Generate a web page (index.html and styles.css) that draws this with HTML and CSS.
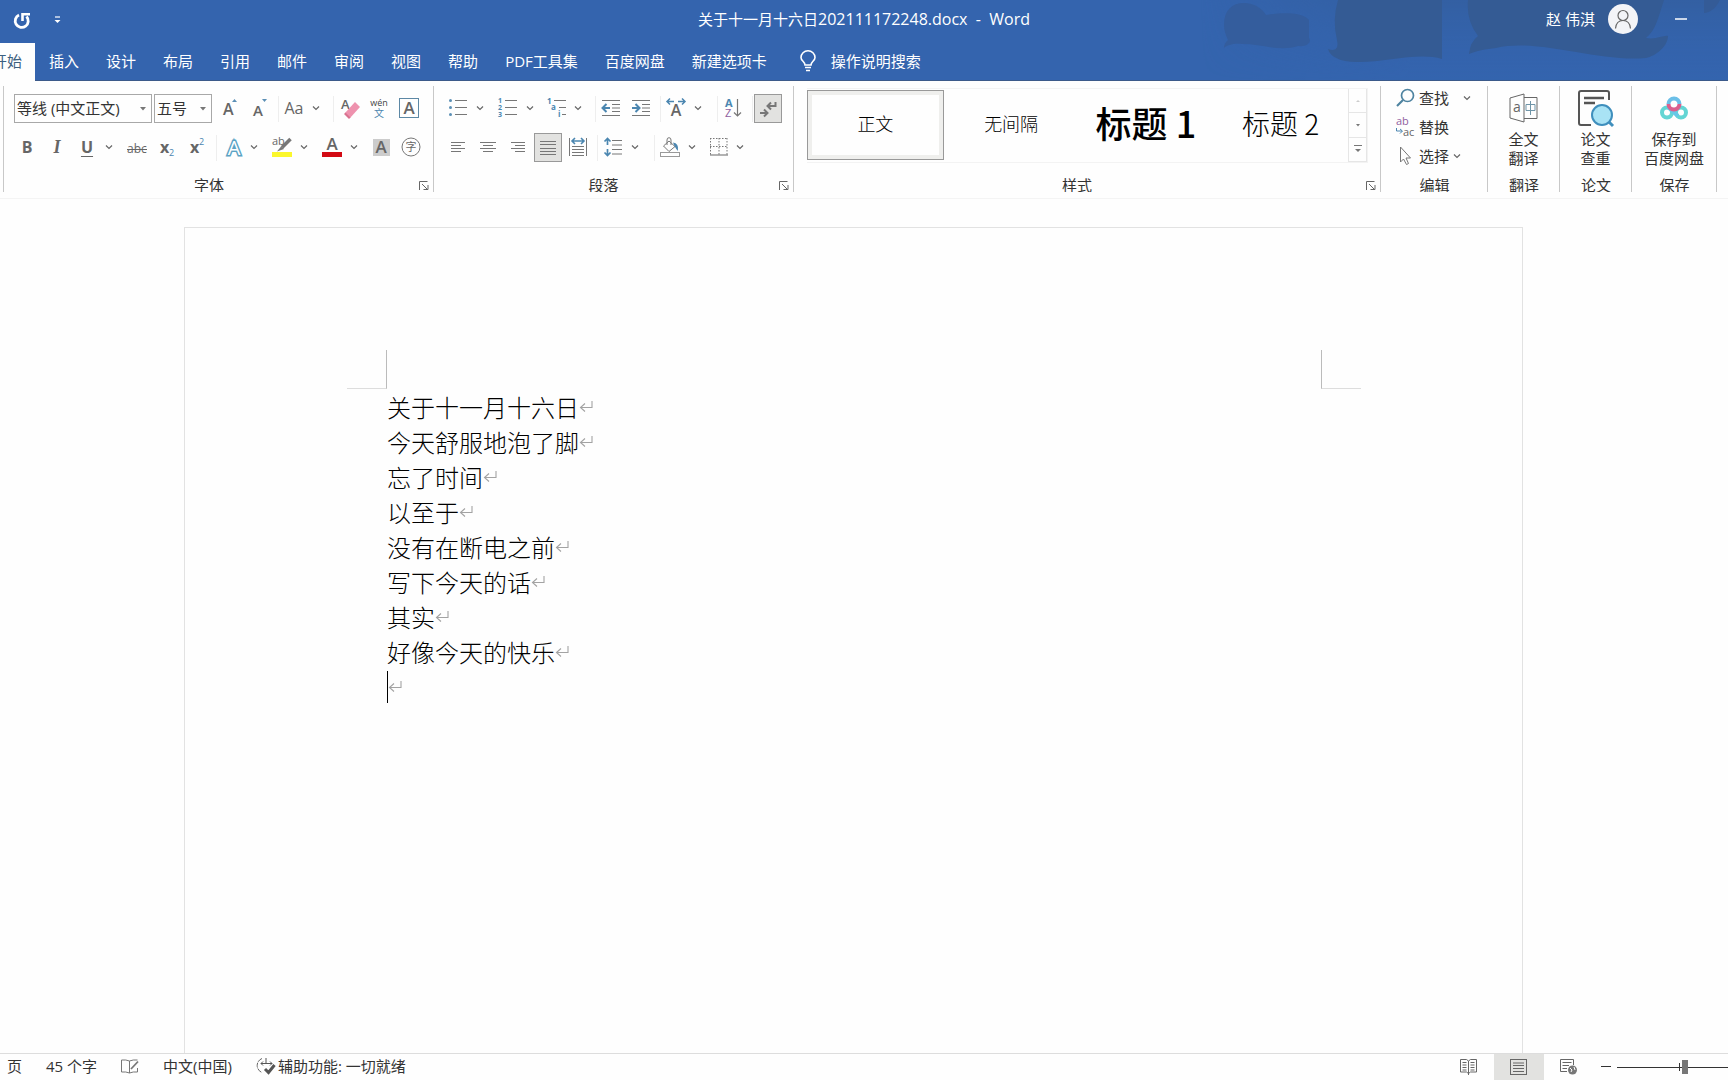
FILE: index.html
```html
<!DOCTYPE html>
<html lang="zh-CN">
<head>
<meta charset="utf-8">
<meta name="viewport" content="width=device-width, initial-scale=1">
<title>关于十一月十六日202111172248.docx - Word</title>
<link rel="stylesheet" href="styles.css">
</head>
<body>
<svg class="defs" aria-hidden="true">
  <symbol id="chev" viewBox="0 0 8 6"><path d="M1 1.5L4 4.5L7 1.5" fill="none" stroke="#666" stroke-width="1.2"/></symbol>
  <symbol id="tri" viewBox="0 0 8 6"><path d="M1 1H7L4 4.5Z" fill="#777"/></symbol>
  <symbol id="ret" viewBox="0 0 14 14"><path d="M13 1V7.5H2M6 3.5L1.5 7.5L6 11.5" fill="none" stroke="#a3a3a3" stroke-width="1.1"/></symbol>
  <symbol id="launch" viewBox="0 0 10 9"><path d="M.5 9V.5H8.500M3 3L8 8M9 4V8.500H4.500" fill="none" stroke="#666"/></symbol>
</svg>

<header class="top">
  <svg class="art" viewBox="0 0 528 81" aria-hidden="true">
    <defs>
      <linearGradient id="haze" x1="0" y1="0" x2="0" y2="1"><stop offset="0" stop-color="#335d9b"/><stop offset="1" stop-color="#3464ae" stop-opacity="0"/></linearGradient>
      <linearGradient id="side" x1="0" y1="0" x2="1" y2="0"><stop offset="0" stop-color="#000"/><stop offset=".4" stop-color="#fff"/><stop offset="1" stop-color="#fff"/></linearGradient>
      <mask id="fade"><rect width="528" height="81" fill="url(#side)"/></mask>
    </defs>
    <rect width="528" height="81" fill="url(#haze)" opacity=".6" mask="url(#fade)"/>
    <path d="M24 25C24 10 32 3 44 3C54 3 62 8 66 15C80 12 104 12 109 20V38C112 42 107 47 98 46C80 52 62 44 42 44C34 43 27 45 24 48Q24 43 28 40Q24 32 24 25Z" fill="#345d9d"/>
    <path d="M138 0H242V59C220 52 186 62 160 62C142 63 130 57 128 49Q140 53 137 40Q132 20 138 0Z" fill="#345b94"/>
    <path d="M268 0H464C458 18 456 30 446 38C456 40 463 35 468 36C468 46 456 56 446 58C424 60 400 56 376 52C350 48 320 42 296 48C286 49 276 51 269 54Q270 42 278 36Q266 20 268 0Z" fill="#345b94"/>
    <path d="M504 0H520C516 8 510 13 504 13Z" fill="#345b97"/>
  </svg>
  <div class="titlebar">
    <div class="quick">
      <button class="plain" aria-label="重复"><svg width="18" height="18" viewBox="0 0 18 18"><path d="M6 4A6.500 6.500 0 1 0 13.500 5.500" fill="none" stroke="#fff" stroke-width="2.800"/><path d="M9.500 10V3.200H17" fill="none" stroke="#fff" stroke-width="2.600"/></svg></button>
      <button class="plain" aria-label="自定义快速访问工具栏"><svg width="7" height="8" viewBox="0 0 7 8"><path d="M1 1H6" stroke="#fff" stroke-width="1.200"/><path d="M.5 4H6.500L3.500 7Z" fill="#fff"/></svg></button>
    </div>
    <h1 class="title">关于十一月十六日<span class="latin">202111172248.docx&nbsp; -&nbsp; Word</span></h1>
    <div class="account">
      <span>赵 伟淇</span>
      <button class="avatar" aria-label="帐户"><svg width="20" height="20" viewBox="0 0 20 20" fill="none" stroke="#666" stroke-width="1.200"><circle cx="10" cy="6.500" r="5"/><path d="M2.500 19.500C3 14 6 11.500 10 11.500S17 14 17.500 19.500"/></svg></button>
      <button class="plain" aria-label="最小化"><svg width="12" height="2" viewBox="0 0 12 2"><path d="M0 1H12" stroke="#fff" stroke-width="1.500"/></svg></button>
    </div>
  </div>
  <nav class="tabs">
    <button class="tab active">开始</button><button class="tab">插入</button><button class="tab">设计</button><button class="tab">布局</button><button class="tab">引用</button><button class="tab">邮件</button><button class="tab">审阅</button><button class="tab">视图</button><button class="tab">帮助</button><button class="tab">PDF工具集</button><button class="tab">百度网盘</button><button class="tab">新建选项卡</button>
    <button class="tell"><svg width="16" height="22" viewBox="0 0 16 22" fill="none" stroke="#fff" stroke-width="1.600"><path d="M5 15C5 11.500 1 11 1 7.500A7 6.700 0 0 1 15 7.500C15 11 11 11.500 11 15Z"/><path d="M5 17.500H11M6 20.500H10"/></svg>操作说明搜索</button>
  </nav>
</header>

<section class="ribbon" aria-label="功能区">
  <div class="group font-group">
    <div class="rows">
      <div class="row combos">
        <label class="combo wide"><select aria-label="字体"><option>等线 (中文正文)</option></select><svg width="8" height="6"><use href="#tri"/></svg></label>
        <label class="combo"><select aria-label="字号"><option>五号</option></select><svg width="8" height="6"><use href="#tri"/></svg></label>
        <button class="ib" aria-label="增大字号"><svg width="20" height="20"><text x="4" y="17" font-size="16" class="mid">A</text><path d="M13 4L15.500 1L18 4Z" fill="#5b8fb5"/></svg></button>
        <button class="ib" aria-label="减小字号"><svg width="20" height="20"><text x="4" y="18" font-size="15" class="mid">A</text><path d="M13 1H18L15.500 4Z" fill="#5b8fb5"/></svg></button>
        <i class="sep"></i>
        <button class="split" aria-label="更改大小写"><span class="g">Aa</span><svg width="8" height="6"><use href="#chev"/></svg></button>
        <i class="sep"></i>
        <button class="ib" aria-label="清除格式"><svg width="20" height="20"><text x="2" y="11" font-size="13" class="mid">A</text><path d="M6 15L16 4L21 9L11 20Z" fill="#ee92ae"/><path d="M5 16L6.500 14.500L11.500 19.500L10 21Z" fill="#d9728f"/></svg></button>
        <button class="ib" aria-label="拼音指南"><svg width="20" height="20"><text x="10" y="8" font-size="9" text-anchor="middle" class="dark">wén</text><text x="10" y="19" font-size="10" text-anchor="middle" class="blue">文</text></svg></button>
        <button class="ib" aria-label="字符边框"><svg width="20" height="20"><rect x=".5" y=".5" width="19" height="19" fill="none" stroke="#5c88a5"/><text x="10" y="16" font-size="17" text-anchor="middle" class="mid">A</text></svg></button>
      </div>
      <div class="row">
        <button class="ib g semi b" aria-label="加粗">B</button>
        <button class="ib g ital" aria-label="倾斜">I</button>
        <button class="split" aria-label="下划线"><span class="g semi under">U</span><svg width="8" height="6"><use href="#chev"/></svg></button>
        <button class="ib" aria-label="删除线"><svg width="22" height="20"><text x="11" y="16" font-size="12" text-anchor="middle">abc</text><path d="M1 12.500H21" stroke="#666"/></svg></button>
        <button class="ib" aria-label="下标"><svg width="20" height="20"><text x="3" y="16" font-size="16" class="semi">x</text><text x="12" y="19" font-size="9" class="blue">2</text></svg></button>
        <button class="ib" aria-label="上标"><svg width="20" height="20"><text x="3" y="16" font-size="16" class="semi">x</text><text x="12" y="8" font-size="9" class="blue">2</text></svg></button>
        <i class="sep"></i>
        <button class="split" aria-label="文本效果"><svg width="20" height="20"><text x="12" y="18" font-size="20" text-anchor="middle" class="outline">A</text></svg><svg width="8" height="6"><use href="#chev"/></svg></button>
        <button class="split" aria-label="突出显示"><svg width="20" height="20"><rect y="15" width="20" height="5" fill="#fbf72c"/><text x="0" y="8" font-size="11">ab</text><path d="M18.500 2L10 10.500" stroke="#777" stroke-width="3.500"/><path d="M9 9.500L12 12L5 14.500Z" fill="#777"/></svg><svg width="8" height="6"><use href="#chev"/></svg></button>
        <button class="split" aria-label="字体颜色"><svg width="20" height="20"><rect y="15" width="20" height="5" fill="#d20a14"/><text x="10" y="13" font-size="17" text-anchor="middle" class="mid">A</text></svg><svg width="8" height="6"><use href="#chev"/></svg></button>
        <button class="ib" aria-label="字符底纹"><svg width="18" height="20"><rect y="2" width="17" height="17" fill="#ccc"/><text x="8" y="16" font-size="17" text-anchor="middle" class="mid">A</text></svg></button>
        <button class="ib" aria-label="带圈字符"><svg width="20" height="20"><circle cx="9" cy="10" r="9" fill="none" stroke="#777"/><text x="9" y="14" font-size="11" text-anchor="middle">字</text></svg></button>
      </div>
    </div>
    <div class="foot"><span>字体</span><button class="launcher" aria-label="字体设置"><svg width="10" height="9"><use href="#launch"/></svg></button></div>
  </div>

  <div class="group para-group">
    <div class="rows">
      <div class="row">
        <button class="split" aria-label="项目符号"><svg width="18" height="20"><g fill="#5b8fb5"><circle cx="1.500" cy="2.500" r="1.500"/><circle cx="1.500" cy="9.500" r="1.500"/><circle cx="1.500" cy="16.500" r="1.500"/></g><path d="M6 2.500H18M6 9.500H18M6 16.500H18" stroke="#777"/></svg><svg width="8" height="6"><use href="#chev"/></svg></button>
        <button class="split" aria-label="编号"><svg width="20" height="20"><g font-size="7" class="blue semi"><text x="0" y="5">1</text><text x="0" y="12">2</text><text x="0" y="19">3</text></g><path d="M7 2.500H19M7 9.500H19M7 16.500H19" stroke="#777"/></svg><svg width="8" height="6"><use href="#chev"/></svg></button>
        <button class="split narrow" aria-label="多级列表"><svg width="20" height="20"><g font-size="8" class="blue semi"><text x="0" y="6">1</text><text x="4" y="12">a</text><text x="11" y="19">i</text></g><path d="M7 2.500H19M12 9.500H19M15 16.500H19" stroke="#777"/></svg><svg width="8" height="6"><use href="#chev"/></svg></button>
        <i class="sep"></i>
        <button class="ib" aria-label="减少缩进"><svg width="20" height="18" fill="none"><path d="M1 1.500H19M11 5.500H19M11 9H19M11 12.500H19M1 16.500H19" stroke="#777"/><path d="M9 9H2M5.500 5L1.500 9L5.500 13" stroke="#4b86b0" stroke-width="2"/></svg></button>
        <button class="ib" aria-label="增加缩进"><svg width="20" height="18" fill="none"><path d="M1 1.500H19M11 5.500H19M11 9H19M11 12.500H19M1 16.500H19" stroke="#777"/><path d="M1 9H8M4.500 5L8.500 9L4.500 13" stroke="#4b86b0" stroke-width="2"/></svg></button>
        <i class="sep"></i>
        <button class="split" aria-label="中文版式"><svg width="20" height="20"><text x="10" y="18" font-size="16" text-anchor="middle" class="mid">A</text><path d="M1 3.500H8M4 .5L1 3.500L4 6.500M12 3.500H19M16 .5L19 3.500L16 6.500" stroke="#4b86b0" stroke-width="1.500" fill="none"/></svg><svg width="8" height="6"><use href="#chev"/></svg></button>
        <i class="sep wider"></i>
        <button class="ib" aria-label="排序"><svg width="18" height="20"><text x="1" y="9" font-size="11" class="blue semi">A</text><text x="1" y="19" font-size="11" class="purple">Z</text><path d="M13.500 1V18M10 14.500L13.500 18L17 14.500" fill="none" stroke="#777" stroke-width="1.200"/></svg></button>
        <i class="sep"></i>
        <button class="ib on" aria-label="显示编辑标记" aria-pressed="true"><svg width="18" height="20" fill="none" stroke="#777" stroke-width="2"><path d="M16.500 3V7H9M12 3.500L8.500 7L12 10.500M1 14H8M5 10.500L8.500 14L5 17.500"/></svg></button>
      </div>
      <div class="row">
        <button class="ib" aria-label="左对齐"><svg width="16" height="12"><path d="M1 1.500H15M1 4.500H11M1 7.500H15M1 10.500H11" stroke="#777"/></svg></button>
        <button class="ib" aria-label="居中"><svg width="16" height="12"><path d="M0 1.500H16M3 4.500H13M0 7.500H16M3 10.500H13" stroke="#777"/></svg></button>
        <button class="ib" aria-label="右对齐"><svg width="16" height="12"><path d="M1 1.500H15M5 4.500H15M1 7.500H15M5 10.500H15" stroke="#777"/></svg></button>
        <button class="ib on" aria-label="两端对齐" aria-pressed="true"><svg width="16" height="14"><path d="M0 .5H16M0 3.500H16M0 7.500H16M0 10.500H16M0 13.500H16" stroke="#777"/></svg></button>
        <button class="ib" aria-label="分散对齐"><svg width="18" height="20" fill="none"><path d="M.5 1V19M17.500 1V19M3 9.500H15M3 12.500H15M3 15.500H15M3 18.500H15" stroke="#777"/><path d="M3 4H15M6 1L3 4L6 7M12 1L15 4L12 7" stroke="#4b86b0" stroke-width="1.600"/></svg></button>
        <i class="sep"></i>
        <button class="split" aria-label="行距"><svg width="18" height="20" fill="none"><path d="M8 3.500H18M8 8H18M8 12.500H18M8 17H18" stroke="#777"/><path d="M3.500 1V8M.5 4.500L3.500 1.500L6.500 4.500M3.500 12V19M.5 15.500L3.500 18.500L6.500 15.500" stroke="#4b86b0" stroke-width="1.700"/></svg><svg width="8" height="6"><use href="#chev"/></svg></button>
        <i class="sep wider"></i>
        <button class="split" aria-label="底纹"><svg width="20" height="20" fill="none"><rect x=".5" y="15.500" width="19" height="4" stroke="#999"/><path d="M9 4L15 9.500L9 14.500L3.500 9Z" stroke="#777"/><path d="M7 8V3Q7 .7 9 .7T11 3V8" stroke="#777"/><path d="M13 5.500Q19 6 18 14Q16 12 14.500 9Z" fill="#4b86b0"/></svg><svg width="8" height="6"><use href="#chev"/></svg></button>
        <button class="split narrow" aria-label="边框"><svg width="18" height="18" fill="none"><path d="M.5 0V17M17 0V17M9 0V17M0 .5H18M0 8.500H18" stroke="#777" stroke-dasharray="1.500 1.500"/><path d="M0 17H18" stroke="#666"/></svg><svg width="8" height="6"><use href="#chev"/></svg></button>
      </div>
    </div>
    <div class="foot"><span>段落</span><button class="launcher" aria-label="段落设置"><svg width="10" height="9"><use href="#launch"/></svg></button></div>
  </div>

  <div class="group style-group">
    <div class="gallery">
      <button class="style selected">正文</button>
      <button class="style">无间隔</button>
      <button class="style h-one">标题 1</button>
      <button class="style h-two">标题 2</button>
      <div class="scroll">
        <button aria-label="上一行" class="dim"><svg width="8" height="6"><path d="M2 4L4 2L6 4Z" fill="#ccc"/></svg></button>
        <button aria-label="下一行"><svg width="8" height="6"><path d="M2 2H6L4 4.500Z" fill="#777"/></svg></button>
        <button aria-label="其他"><svg width="8" height="8"><path d="M0 .5H8" stroke="#777"/><path d="M1 4H7L4 7Z" fill="#777"/></svg></button>
      </div>
    </div>
    <div class="foot"><span>样式</span><button class="launcher" aria-label="样式设置"><svg width="10" height="9"><use href="#launch"/></svg></button></div>
  </div>

  <div class="group edit-group">
    <div class="list">
      <button class="cmd"><svg width="20" height="20" fill="none"><circle cx="12.500" cy="7.500" r="6" stroke="#4e83a0" stroke-width="1.700"/><path d="M8 12L2 18" stroke="#4e83a0" stroke-width="2.200"/></svg>查找<svg class="far" width="8" height="6"><use href="#chev"/></svg></button>
      <button class="cmd"><svg width="20" height="20"><text x="1" y="8" font-size="11" class="purple">ab</text><text x="8" y="19" font-size="11">ac</text><path d="M1.500 11V14H7M5 12L7.500 14L5 16.500" fill="none" stroke="#4b86b0"/></svg>替换</button>
      <button class="cmd"><svg width="20" height="20" fill="none"><path d="M5.500 1V16L8.500 13L11.500 18.500L13.500 17.500L11 12H15.500Z" stroke="#777"/></svg>选择<svg width="8" height="6"><use href="#chev"/></svg></button>
    </div>
    <div class="foot"><span>编辑</span></div>
  </div>

  <div class="group tall">
    <button class="big"><svg width="30" height="36" viewBox="0 0 30 36" fill="none" stroke="#666"><path d="M1 8L15 4V32L1 28ZM15 7.500H28V28.500H15"/><text x="8" y="22" font-size="14" text-anchor="middle" stroke="none">a</text><path d="M17 14.500H26V20.500H17ZM21.500 11V25" stroke="#6f95a8"/></svg>全文<br>翻译</button>
    <div class="foot"><span>翻译</span></div>
  </div>
  <div class="group tall">
    <button class="big"><svg width="36" height="36" viewBox="0 0 36 36" fill="none"><path d="M31 10V3Q31 1 29 1H3Q1 1 1 3V33Q1 35 3 35H13" stroke="#555" stroke-width="2"/><path d="M6 8H26M6 13H17" stroke="#555" stroke-width="2.500"/><circle cx="24" cy="25" r="10" fill="#a9e3f5" stroke="#3f8fbd" stroke-width="2"/><path d="M31 32L35 36" stroke="#3f8fbd" stroke-width="3"/></svg>论文<br>查重</button>
    <div class="foot"><span>论文</span></div>
  </div>
  <div class="group save">
    <button class="big"><svg width="28" height="36" viewBox="0 0 28 36" fill="none" stroke-width="4"><circle cx="7" cy="22.500" r="5" stroke="#63d5d4"/><circle cx="21" cy="22.500" r="5" stroke="#63d5d4"/><path d="M8 17L18 26" stroke="#65c8e8"/><path d="M8.500 14A5.500 5.500 0 0 1 19.500 14" stroke="#6bbfe8"/><path d="M8.500 14A5.500 5.500 0 0 0 19.500 14" stroke="#d9608e"/></svg>保存到<br>百度网盘</button>
    <div class="foot"><span>保存</span></div>
  </div>
</section>

<main class="workspace">
  <article class="page">
    <div class="corners"><i class="corner left"></i><i class="corner right"></i></div>
    <div class="text">
      <p>关于十一月十六日<svg width="14" height="14"><use href="#ret"/></svg></p>
      <p>今天舒服地泡了脚<svg width="14" height="14"><use href="#ret"/></svg></p>
      <p>忘了时间<svg width="14" height="14"><use href="#ret"/></svg></p>
      <p>以至于<svg width="14" height="14"><use href="#ret"/></svg></p>
      <p>没有在断电之前<svg width="14" height="14"><use href="#ret"/></svg></p>
      <p>写下今天的话<svg width="14" height="14"><use href="#ret"/></svg></p>
      <p>其实<svg width="14" height="14"><use href="#ret"/></svg></p>
      <p>好像今天的快乐<svg width="14" height="14"><use href="#ret"/></svg></p>
      <p class="current"><svg width="14" height="14"><use href="#ret"/></svg></p>
    </div>
  </article>
</main>

<footer class="status">
  <div class="info">
    <span>页</span>
    <span>45 个字</span>
    <svg width="18" height="15" fill="none" stroke="#777"><path d="M8.500 2V14M8.500 2Q5 .5 .5 1V13Q5 12.500 8.500 14Q12 12.500 16.500 13V9M8.500 2Q12 .5 16.500 1"/><path d="M10 10L17 2.500" stroke-width="1.800"/></svg>
    <span>中文(中国)</span>
    <span class="access"><svg width="20" height="18" fill="none"><path d="M6 1.500A7.500 7.500 0 0 0 6 15.500" stroke="#666" stroke-dasharray="5 1"/><path d="M10 1V6M5 6.500H16M7 4.500L5 6.500L7 8.500M14 4.500L16 6.500L14 8.500" stroke="#555"/><path d="M9 12L12.500 15.500L18.500 8" stroke="#555" stroke-width="3"/></svg>辅助功能: 一切就绪</span>
  </div>
  <div class="views">
    <button class="view" aria-label="阅读视图"><svg width="18" height="16" fill="none" stroke="#666"><path d="M8.500 2L6.500 .5H.5V13H6.500L8.500 14.500L10.500 13H16.500V.5H10.500ZM8.500 2V16"/><path d="M2.500 3.500H6.500M2.500 6H6.500M2.500 8.500H6.500M2.500 11H6.500M10.500 3.500H14.500M10.500 6H14.500M10.500 8.500H14.500M10.500 11H14.500"/></svg></button>
    <button class="view on-view" aria-label="页面视图"><svg width="18" height="16" fill="none" stroke="#666"><rect x=".5" y=".5" width="16" height="15"/><path d="M3 4H14M3 6.500H14M3 9.500H14M3 12.500H14"/></svg></button>
    <button class="view" aria-label="Web 版式视图"><svg width="18" height="16" fill="none" stroke="#666"><path d="M7 12.500H.5V.5H13.500V6M2.500 3.500H11.500M2.500 6.500H9M2.500 9.500H7"/><circle cx="12.500" cy="11" r="4.500" fill="#777" stroke="none"/><path d="M10 9L12 11L11 13M14 8L15 11" stroke="#fff"/></svg></button>
    <button class="minus" aria-label="缩小"><svg width="10" height="2"><path d="M0 .5H10" stroke="#333"/></svg></button>
    <input class="zoom" type="range" min="0" max="100" value="62" aria-label="缩放">
  </div>
</footer>
</body>
</html>
```
FILE: styles.css
```css
* { box-sizing: border-box; }
body {
  margin: 0;
  height: 100vh;
  display: flex;
  flex-direction: column;
  overflow: hidden;
  background: #fefefe;
  color: #333;
  font: 15px/20px "Open Sans", "Noto Sans CJK SC", sans-serif;
}
button, select, input { font: inherit; color: inherit; margin: 0; }
button { padding: 0; border: 0; background: none; white-space: nowrap; }
svg { display: block; flex: none; overflow: visible; }
svg text { fill: #666; }
.defs { position: absolute; width: 0; height: 0; }

/* Title bar and tabs */
.top { position: relative; background: #3464ae; color: #fff; border-bottom: 1px solid #3c5a8a; }
.art { position: absolute; right: 0; top: 0; width: 528px; height: 81px; overflow: hidden; }
.titlebar { position: relative; display: grid; grid-template-columns: 1fr auto 1fr; height: 43px; padding-bottom: 6px; align-items: center; }
.quick { display: flex; align-items: center; gap: 23px; padding: 2px 0 0 13px; }
.plain { display: flex; align-items: center; }
.title { margin: 0; font-size: 15px; font-weight: 400; }
.latin { font-size: 16px; }
.account { display: flex; align-items: center; justify-content: flex-end; gap: 13px; padding-right: 41px; }
.avatar { display: flex; align-items: center; justify-content: center; width: 30px; height: 30px; margin-right: 24px; border-radius: 50%; background: #f3f4f7; }
.tabs { position: relative; display: flex; gap: 1px; height: 37px; }
.tab { padding: 0 13px 2px; }
.active { display: flex; align-items: center; justify-content: flex-end; width: 35px; overflow: hidden; background: #fefefe; color: #3d6080; height: 38px; padding-bottom: 3px; }
.tell { display: flex; align-items: center; gap: 15px; margin-left: 19px; padding-bottom: 2px; }

/* Ribbon */
.ribbon { display: flex; padding: 5px 11px 6px 3px; border-bottom: 1px solid #f4f4f4; }
.group { display: flex; flex-direction: column; height: 106px; border-left: 1px solid #c8c8c8; overflow: hidden; }
.font-group { width: 430px; padding-left: 8px; }
.para-group { width: 360px; padding-left: 9px; }
.style-group { flex: 1; padding-left: 13px; }
.edit-group { width: 107px; }
.tall { width: 72px; }
.save { width: 86px; border-right: 1px solid #c8c8c8; }
.rows { display: grid; gap: 10px; padding-top: 8px; }
.row { display: flex; align-items: center; height: 29px; }
.combos { padding-left: 2px; }
.combo { display: grid; align-items: center; width: 58px; height: 29px; margin-right: 2px; border: 1px solid #a8a8a8; }
.combo.wide { width: 138px; }
.combo select { grid-area: 1 / 1; width: 100%; padding: 0 2px 2px; border: 0; background: none; appearance: none; }
.combo svg { grid-area: 1 / 1; justify-self: end; margin-right: 4px; }
.ib { display: flex; align-items: center; justify-content: center; width: 30px; height: 29px; padding-bottom: 2px; }
.on { width: 28px; margin: 0 1px; padding: 0; border: 1px solid #999; background: #e2e2e0; }
.split { display: grid; grid-template-columns: 30px 14px; align-items: center; justify-items: center; width: 50px; height: 29px; padding-bottom: 2px; }
.narrow { width: 48px; grid-template-columns: 28px 14px; }
.sep { width: 5px; height: 26px; border-right: 1px solid #eee; }
.wider { width: 7px; }
.g { color: #666; font-size: 16px; }
.semi { font-weight: 700; }
.mid { font-weight: 600; }
.ital { font-family: "Liberation Serif", serif; font-style: italic; font-weight: 700; font-size: 18px; }
.under { text-decoration: underline; text-underline-offset: 3px; text-decoration-thickness: 1px; }
svg .blue, svg .blue text { fill: #4b86b0; }
svg .purple { fill: #9060a0; }
svg .dark { fill: #444; }
svg .outline { fill: #fff; stroke: #5ba3c4; stroke-width: 3px; paint-order: stroke; }
.foot { display: flex; align-items: center; height: 20px; margin: auto -1px -3px 0; }
.font-group .foot { margin-left: -8px; }
.para-group .foot { margin-left: -10px; }
.style-group .foot { margin-left: -14px; }
.foot span { flex: 1; text-align: center; }
.launcher { width: 20px; padding-left: 5px; }

/* Style gallery */
.gallery { display: flex; height: 75px; margin: 2px 12px 0 0; border: 1px solid #f3f3f3; border-left: 0; }
.style { flex: 1; height: 70px; margin-top: 1px; padding-bottom: 4px; font: 300 18px/26px "Noto Sans CJK SC", sans-serif; color: #000; }
.selected { border: 1px solid #999; box-shadow: inset 0 0 0 4px #efefed; }
.h-one { font-size: 36px; font-weight: 500; padding-bottom: 6px; }
.h-two { font-size: 28px; }
.scroll { display: grid; grid-template-rows: 1fr 1fr 1fr; width: 19px; border-left: 1px solid #e6e6e6; border-right: 1px solid #e6e6e6; }
.scroll button { display: flex; align-items: center; justify-content: center; border-bottom: 1px solid #e6e6e6; }

/* Command lists */
.list { display: grid; grid-auto-rows: 29px; padding: 0 0 0 14px; margin-top: -3px; }
.cmd { display: flex; align-items: center; gap: 4px; }
.far { margin-left: 10px; }
.big { padding-top: 4px; line-height: 19px; }
.big svg { margin: 0 auto 4px; }

/* Document */
.workspace { flex: 1; min-height: 0; display: flex; padding: 28px 205px 0 184px; }
.page { flex: 1; padding: 122px 161px 0 162px; border: 1px solid #e2e2e2; border-bottom: 0; }
.corners { display: flex; justify-content: space-between; }
.corner { width: 40px; height: 39px; border: 0 solid #bbb; border-bottom: 1px solid #ddd; }
.corner.left { border-right-width: 1px; }
.corner.right { border-left-width: 1px; }
.text { padding-left: 40px; font: 300 24px/35px "Noto Sans CJK SC", sans-serif; color: #000; }
.text p { display: flex; align-items: center; height: 35px; margin: 0; }
.text .current::before { content: ""; width: 1px; height: 32px; background: #000; }

/* Status bar */
.status { display: flex; justify-content: space-between; height: 27px; border-top: 1px solid #ddd; }
.info, .access, .views { display: flex; align-items: center; }
.info { gap: 24px; padding: 0 0 2px 7px; }
.access { gap: 2px; }
.view { display: flex; align-items: center; justify-content: center; width: 50px; height: 26px; }
.on-view { background: #e2e2e0; }
.minus { width: 10px; margin: 0 6px 0 7px; }
.zoom { width: 111px; height: 16px; appearance: none; background: linear-gradient(#333, #333) 62px 50% / 1px 8px no-repeat, linear-gradient(#333, #333) 0 50% / 100% 1px no-repeat; }
.zoom::-webkit-slider-thumb { appearance: none; width: 6px; height: 14px; background: #777; }
```
